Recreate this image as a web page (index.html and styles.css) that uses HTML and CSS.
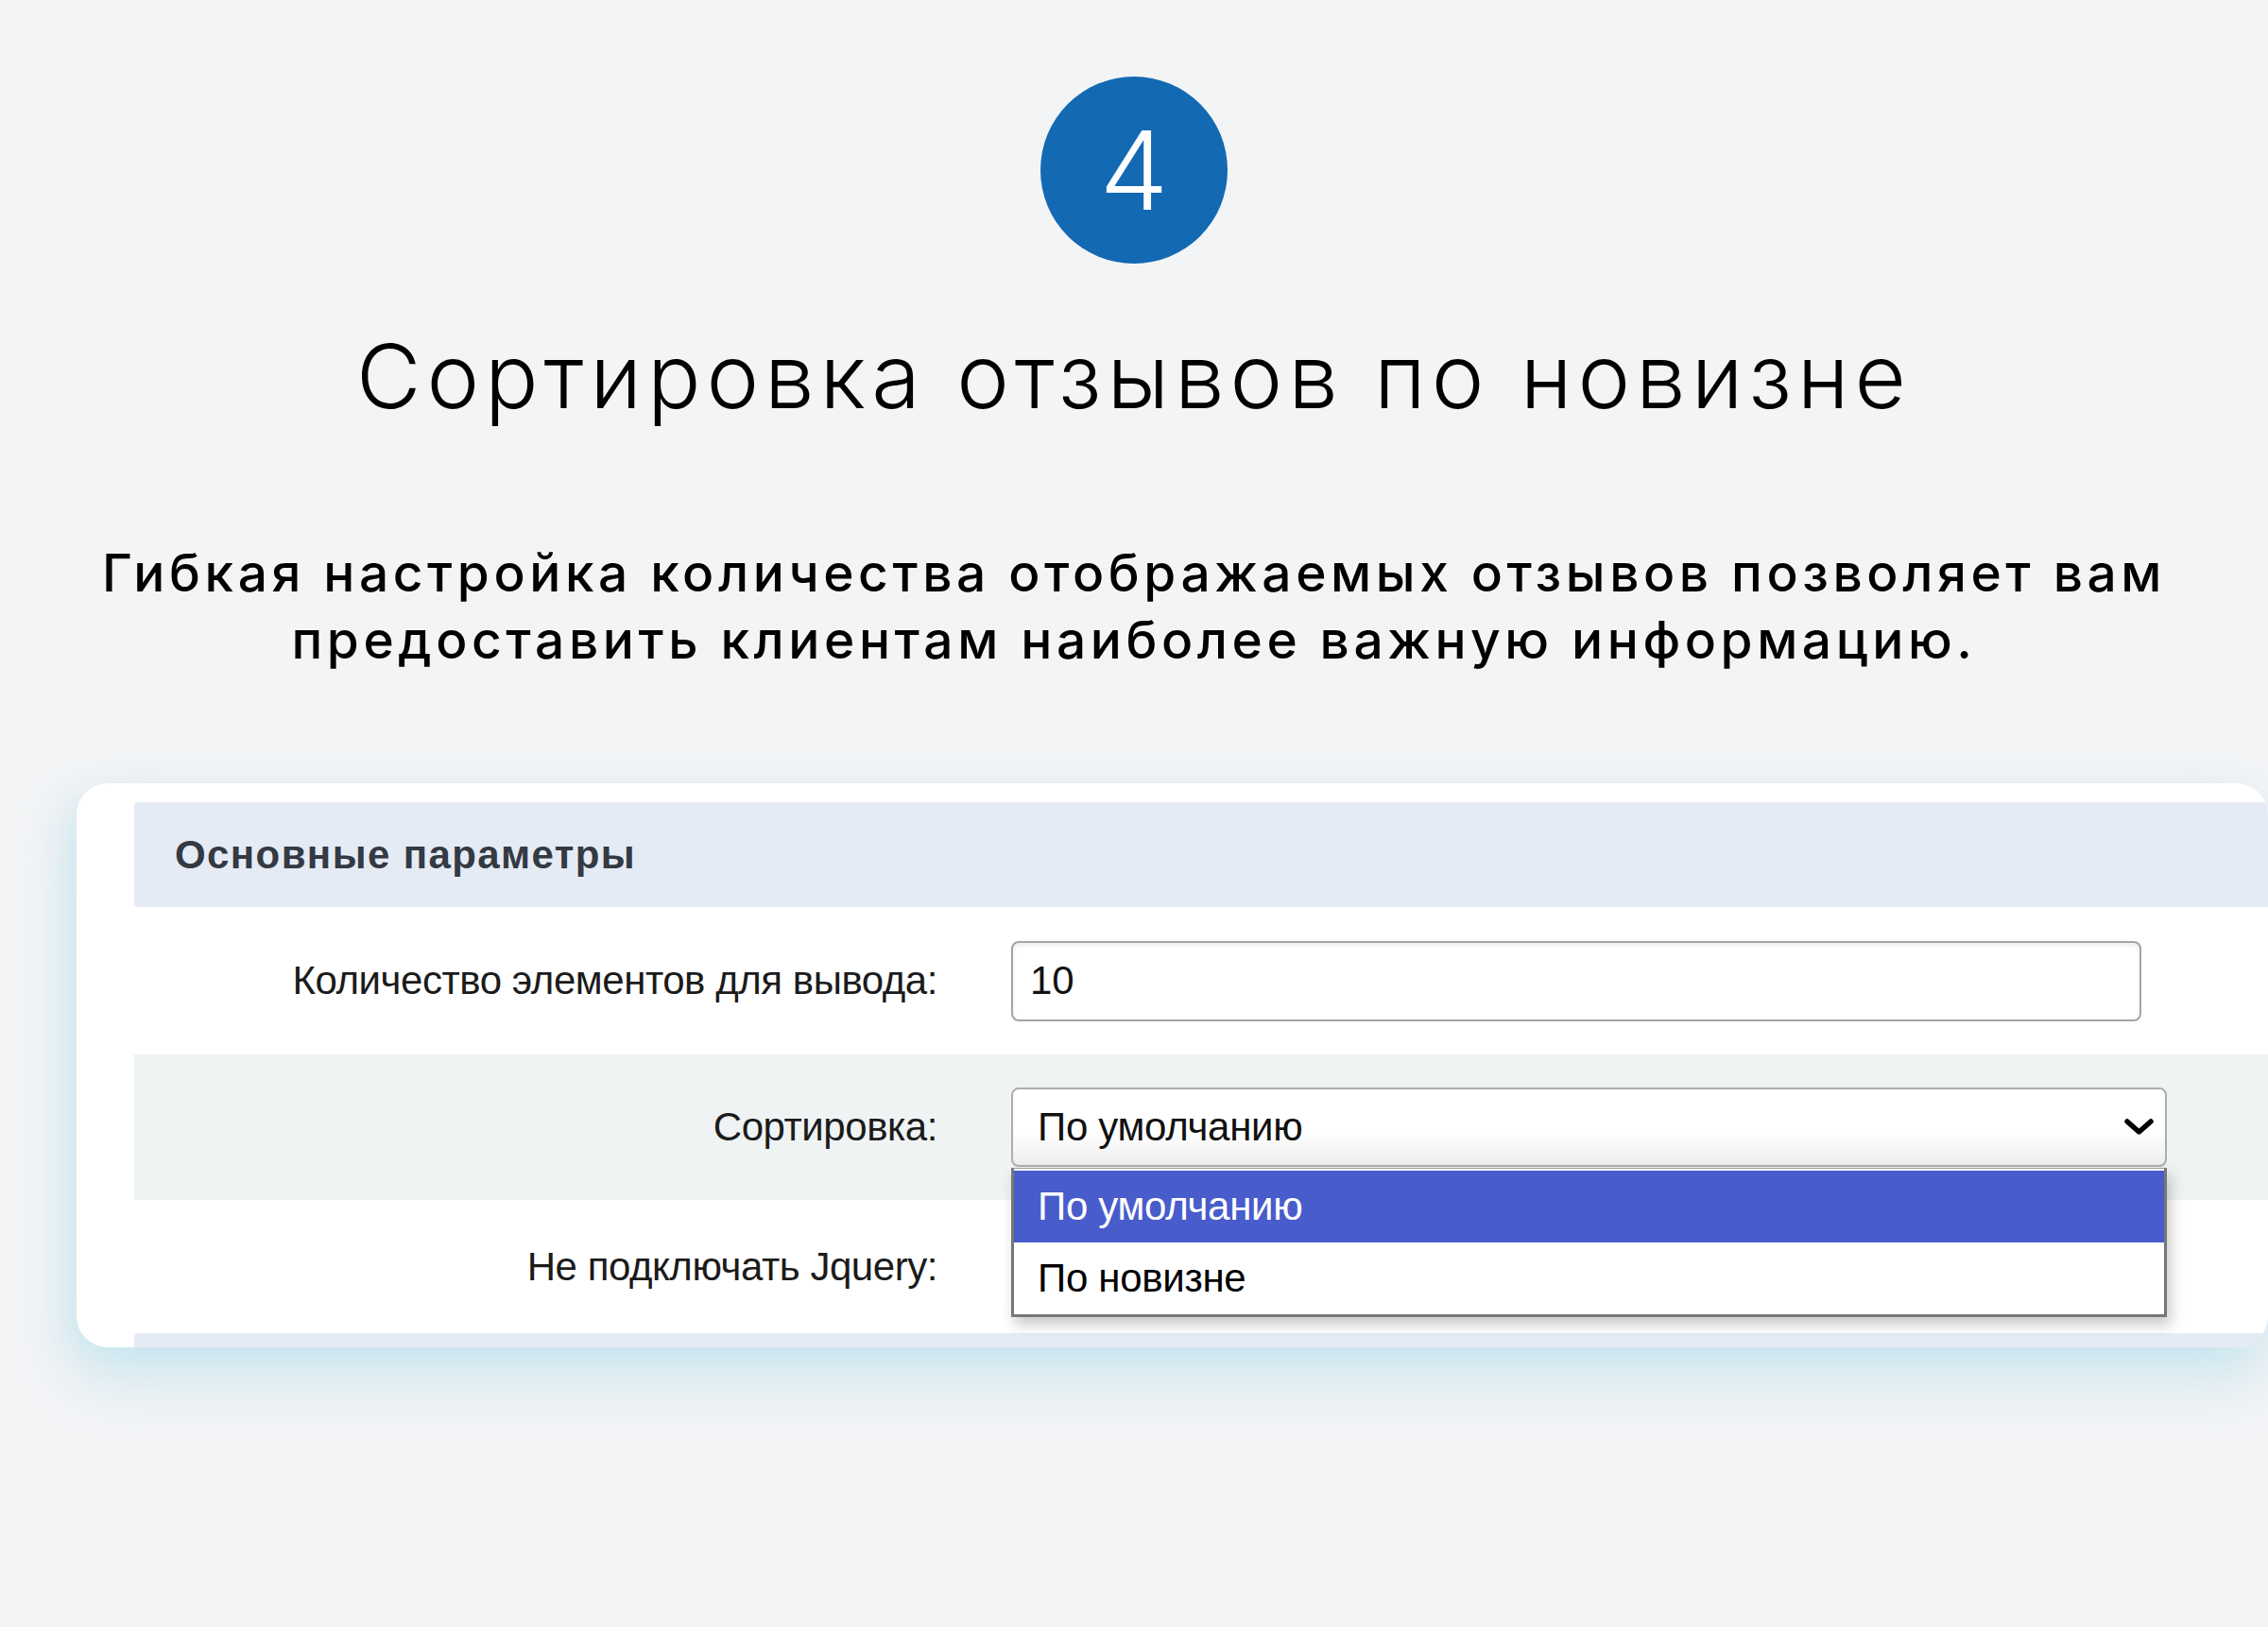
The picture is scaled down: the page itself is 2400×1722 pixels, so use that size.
FILE: index.html
```html
<!DOCTYPE html>
<html lang="ru">
<head>
<meta charset="utf-8">
<title>Сортировка отзывов по новизне</title>
<link rel="stylesheet" href="styles.css">
</head>
<body>
<main class="hero">
  <div class="badge">4</div>
  <h1 class="title">Сортировка отзывов по новизне</h1>
  <p class="lead">Гибкая настройка количества отображаемых отзывов позволяет вам<br>предоставить клиентам наиболее важную информацию.</p>
  <section class="card">
    <div class="panel">
      <div class="panel-head">Основные параметры</div>
      <div class="row">
        <div class="label">Количество элементов для вывода:</div>
        <div class="field"><input class="text-input" type="text" value="10"></div>
      </div>
      <div class="row row-alt">
        <div class="label">Сортировка:</div>
        <div class="field">
          <div class="select">
            <span>По умолчанию</span>
            <svg class="chev" width="31" height="18" viewBox="0 0 31 18"><path d="M3 3 L15.5 14 L28 3" fill="none" stroke="#000" stroke-width="5.5" stroke-linecap="round" stroke-linejoin="round"/></svg>
            <ul class="options">
              <li class="opt opt-active">По умолчанию</li>
              <li class="opt">По новизне</li>
            </ul>
          </div>
        </div>
      </div>
      <div class="row row-last">
        <div class="label">Не подключать Jquery:</div>
        <div class="field"></div>
      </div>
      <div class="panel-head panel-head-next"></div>
    </div>
  </section>
</main>
</body>
</html>
```
FILE: styles.css
```css
html, body {
  margin: 0;
  padding: 0;
}
body {
  width: 2400px;
  height: 1722px;
  overflow: hidden;
  background: #f3f4f6;
  font-family: "Liberation Sans", Arial, sans-serif;
  color: #000;
}
.hero {
  display: flex;
  flex-direction: column;
  align-items: center;
}
.badge {
  margin-top: 81px;
  width: 198px;
  height: 198px;
  border-radius: 50%;
  background: #1369b2;
  color: #fff;
  display: flex;
  align-items: center;
  justify-content: center;
  font-family: Inter, "Noto Sans", sans-serif;
  font-weight: 300;
  font-size: 116px;
  line-height: 1;
}
.title {
  margin: 73px 0 0;
  font-family: Inter, "Noto Sans", sans-serif;
  font-weight: 300;
  font-size: 94px;
  line-height: 93px;
  letter-spacing: 5.9px;
  color: #000;
  text-align: center;
  white-space: nowrap;
}
.lead {
  margin: 126px 0 0;
  font-family: Inter, "Noto Sans", sans-serif;
  font-weight: 500;
  font-size: 55px;
  line-height: 71px;
  letter-spacing: 4.6px;
  text-align: center;
  white-space: nowrap;
}
.card {
  align-self: flex-start;
  margin: 116px 0 0 81px;
  width: 2319px;
  height: 597px;
  box-sizing: border-box;
  padding: 20px 0 0 61px;
  background: #fff;
  border-radius: 33px;
  overflow: hidden;
  box-shadow: 0 36px 60px rgba(175, 222, 236, 0.45), -12px 12px 40px rgba(175, 222, 236, 0.35);
}
.panel {
  display: flex;
  flex-direction: column;
}
.panel-head {
  height: 111px;
  flex: none;
  display: flex;
  align-items: center;
  padding-left: 43px;
  background: #e5ebf5;
  border-radius: 4px 0 0 4px;
  font-weight: 700;
  font-size: 42px;
  letter-spacing: 1.4px;
  color: #343a43;
}
.panel-head-next {
  height: 40px;
}
.row {
  display: grid;
  grid-template-columns: 850px 1fr;
  column-gap: 78px;
  align-items: center;
  height: 156px;
}
.row-alt {
  height: 154px;
  background: #eff3f4;
}
.row-last {
  height: 141px;
}
.label {
  text-align: right;
  font-size: 42px;
  letter-spacing: -0.45px;
  color: #1b1b1b;
}
.field {
  position: relative;
  height: 85px;
}
.text-input {
  display: block;
  box-sizing: border-box;
  width: 1196px;
  height: 85px;
  margin: 0;
  padding: 0 0 0 18px;
  border: 2px solid #a1a5ab;
  border-radius: 8px;
  box-shadow: inset 0 3px 4px rgba(0, 0, 0, 0.07);
  background: #fff;
  font-family: "Liberation Sans", Arial, sans-serif;
  font-size: 42px;
  color: #111;
  outline: none;
}
.select {
  position: relative;
  box-sizing: border-box;
  width: 1223px;
  height: 84px;
  border: 2px solid #adadad;
  border-radius: 8px;
  background: linear-gradient(#ffffff 55%, #ededed);
  display: flex;
  align-items: center;
  padding-left: 26px;
  font-size: 42px;
  letter-spacing: -0.3px;
  color: #111;
}
.chev {
  position: absolute;
  right: 12px;
  top: 31px;
}
.options {
  position: absolute;
  left: -2px;
  top: 83px;
  width: 1223px;
  box-sizing: border-box;
  margin: 0;
  padding: 2px 0 0;
  list-style: none;
  background: #fff;
  border: 3px solid #777;
  border-top: 1px solid #999;
  box-shadow: 4px 8px 14px rgba(0, 0, 0, 0.22);
}
.opt {
  height: 76px;
  display: flex;
  align-items: center;
  padding-left: 25px;
  font-size: 42px;
  letter-spacing: -0.3px;
  color: #000;
}
.opt-active {
  background: #485ccb;
  color: #fff;
}
```
